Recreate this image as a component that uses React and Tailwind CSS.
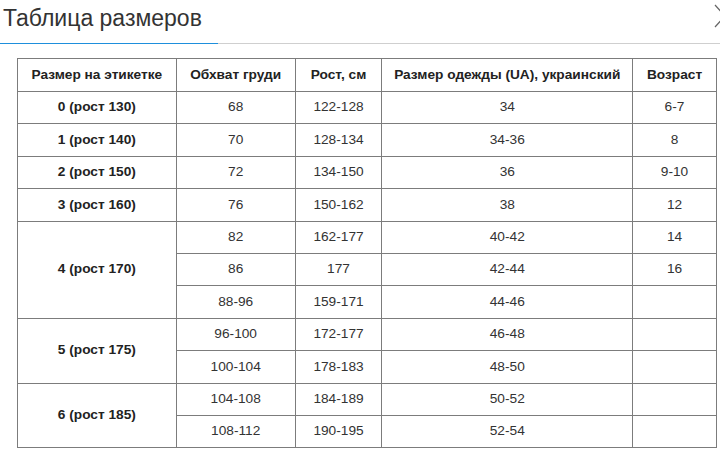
const rows = [
  { size: "0 (рост 130)", items: [["68", "122-128", "34", "6-7"]] },
  { size: "1 (рост 140)", items: [["70", "128-134", "34-36", "8"]] },
  { size: "2 (рост 150)", items: [["72", "134-150", "36", "9-10"]] },
  { size: "3 (рост 160)", items: [["76", "150-162", "38", "12"]] },
  {
    size: "4 (рост 170)",
    items: [
      ["82", "162-177", "40-42", "14"],
      ["86", "177", "42-44", "16"],
      ["88-96", "159-171", "44-46", ""],
    ],
  },
  {
    size: "5 (рост 175)",
    items: [
      ["96-100", "172-177", "46-48", ""],
      ["100-104", "178-183", "48-50", ""],
    ],
  },
  {
    size: "6 (рост 185)",
    items: [
      ["104-108", "184-189", "50-52", ""],
      ["108-112", "190-195", "52-54", ""],
    ],
  },
];

const cell = "border border-[#7c7c7c] text-center align-middle h-[32.4px] p-0";

export default function App() {
  return (
    <div className="relative w-[720px] h-[450px] overflow-hidden bg-white font-['Liberation_Sans',Arial,sans-serif]">
      {/* заголовок */}
      <div className="h-[43px] pl-[3px] pt-[1px] text-[23px] leading-[34px] text-[#333]">Таблица размеров</div>
      <div className="flex">
        <div className="w-[218px] h-px bg-[#1e8fdc]" />
        <div className="flex-1 h-px bg-[#cfcfcf]" />
      </div>

      {/* закрыть */}
      <svg className="absolute left-[713px] top-[4px]" width="24" height="24" viewBox="0 0 24 24">
        <path d="M2 1 L12 12 L2 23" fill="none" stroke="#666" strokeWidth="1.2" />
      </svg>

      <table className="ml-[17px] mt-[14px] w-[700px] border-collapse text-[13.7px] text-[#333]">
        <colgroup>
          <col className="w-[159px]" />
          <col className="w-[119px]" />
          <col className="w-[87px]" />
          <col className="w-[251px]" />
          <col className="w-[84px]" />
        </colgroup>
        <thead>
          <tr>
            {["Размер на этикетке", "Обхват груди", "Рост, см", "Размер одежды (UA), украинский", "Возраст"].map((h) => (
              <th key={h} className={cell + " h-[33px] font-bold text-[#222]"}>
                {h}
              </th>
            ))}
          </tr>
        </thead>
        <tbody>
          {rows.map((r) =>
            r.items.map((it, i) => (
              <tr key={r.size + i}>
                {i === 0 && (
                  <td rowSpan={r.items.length} className={cell + " font-bold text-[#222]"}>
                    {r.size}
                  </td>
                )}
                {it.map((v, j) => (
                  <td key={j} className={cell}>
                    {v}
                  </td>
                ))}
              </tr>
            ))
          )}
        </tbody>
      </table>
    </div>
  );
}
